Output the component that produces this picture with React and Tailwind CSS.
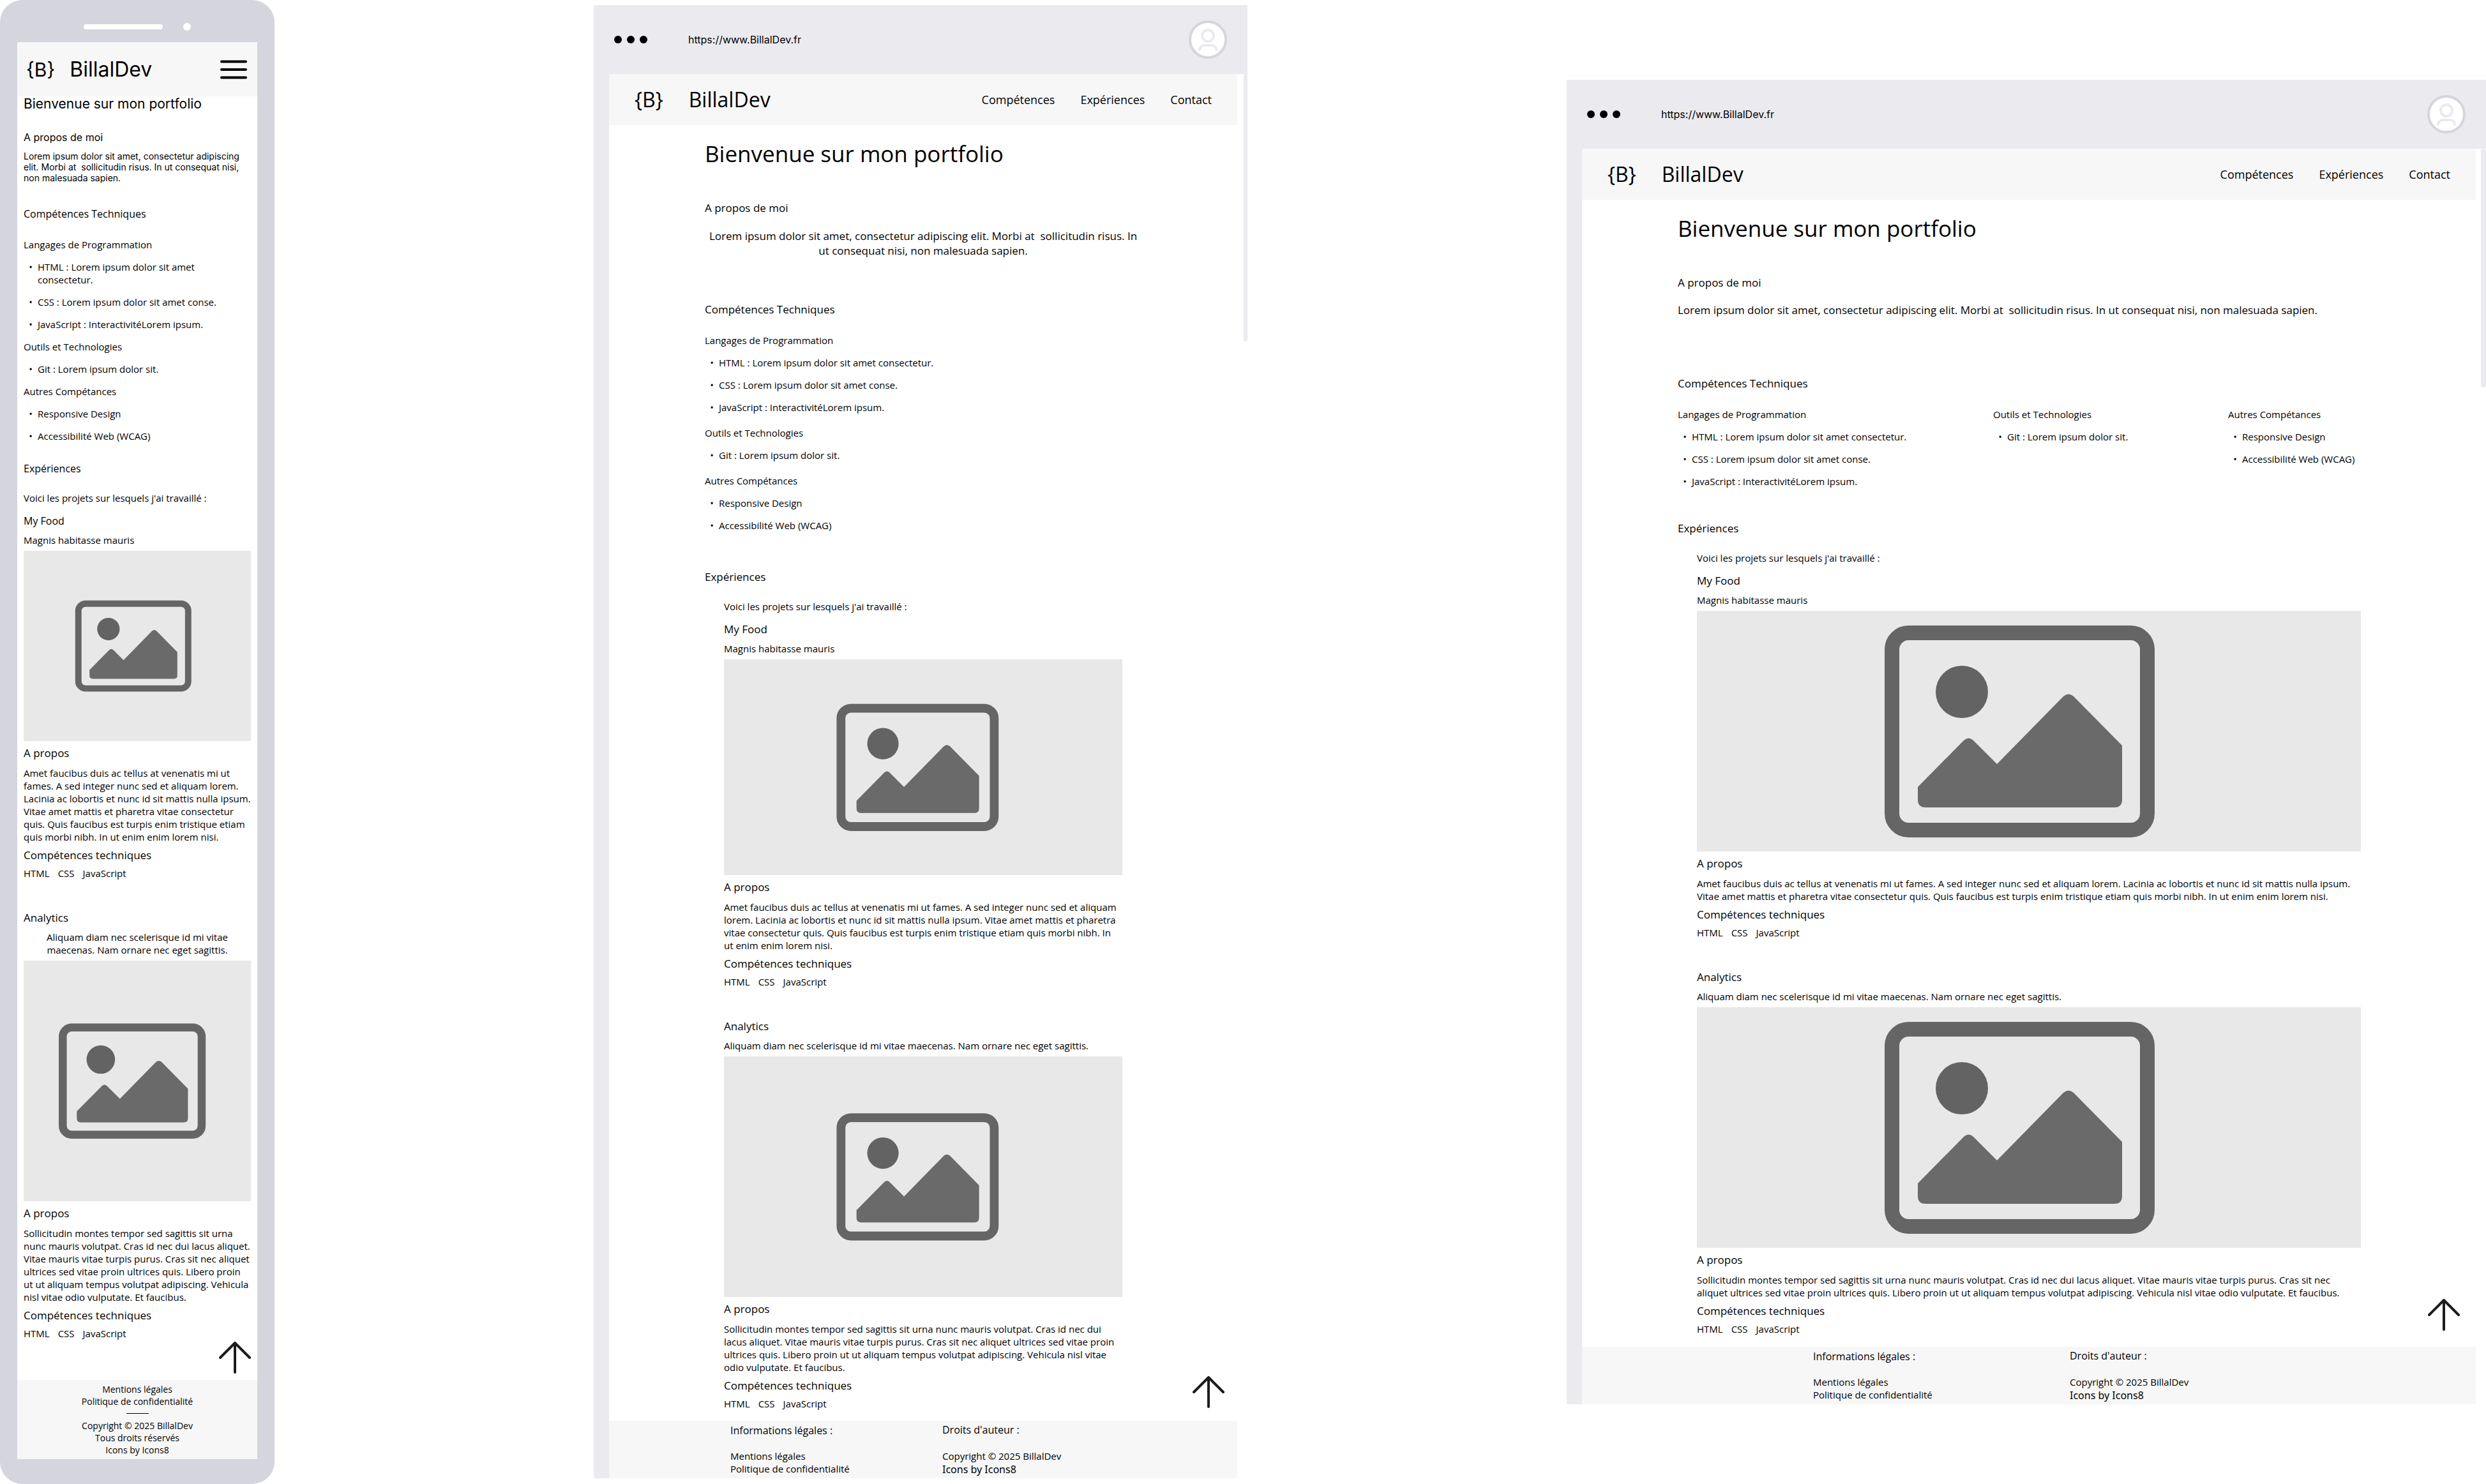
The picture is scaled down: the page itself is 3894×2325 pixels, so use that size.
import React from "react";

const INTRO =
  "Lorem ipsum dolor sit amet, consectetur adipiscing elit. Morbi at\u00a0 sollicitudin risus. In ut consequat nisi, non malesuada sapien.";

const SKILLS = [
  {
    title: "Langages de Programmation",
    items: [
      "HTML : Lorem ipsum dolor sit amet consectetur.",
      "CSS : Lorem ipsum dolor sit amet conse.",
      "JavaScript : InteractivitéLorem ipsum.",
    ],
  },
  { title: "Outils et Technologies", items: ["Git : Lorem ipsum dolor sit."] },
  { title: "Autres Compétances", items: ["Responsive Design", "Accessibilité Web (WCAG)"] },
];

const FOOD = {
  title: "My Food",
  subtitle: "Magnis habitasse mauris",
  about:
    "Amet faucibus duis ac tellus at venenatis mi ut fames. A sed integer nunc sed et aliquam lorem. Lacinia ac lobortis et nunc id sit mattis nulla ipsum. Vitae amet mattis et pharetra vitae consectetur quis. Quis faucibus est turpis enim tristique etiam quis morbi nibh. In ut enim enim lorem nisi.",
};

const ANALYTICS = {
  title: "Analytics",
  subtitle: "Aliquam diam nec scelerisque id mi vitae maecenas. Nam ornare nec eget sagittis.",
  about:
    "Sollicitudin montes tempor sed sagittis sit urna nunc mauris volutpat. Cras id nec dui lacus aliquet. Vitae mauris vitae turpis purus. Cras sit nec aliquet ultrices sed vitae proin ultrices quis. Libero proin ut ut aliquam tempus volutpat adipiscing. Vehicula nisl vitae odio vulputate. Et faucibus.",
};

function Placeholder({ height }) {
  return (
    <svg
      role="img"
      aria-label="Aperçu du projet"
      viewBox="0 0 1040 693"
      preserveAspectRatio="xMidYMid slice"
      className={`mt-[7px] block w-full bg-[#e8e8e8] ${height}`}
    >
      <rect x="305.5" y="192.5" width="400" height="309" rx="26" fill="none" stroke="#656565" strokeWidth="23" />
      <circle cx="415" cy="285" r="41" fill="#636363" />
      <path
        d="M346 434L418 361Q425.500 354 433 361L470 398L574 292Q582 285 590 292L666 369V454Q666 466 654 466H358Q346 466 346 454Z"
        fill="#6a6a6a"
      />
    </svg>
  );
}

function BackToTop({ place }) {
  return (
    <button type="button" aria-label="Retour en haut" className={`absolute size-[50px] ${place}`}>
      <svg viewBox="0 0 50 50" className="size-full" fill="none" stroke="#1c1c1c" strokeWidth="4" strokeLinecap="round" strokeLinejoin="round">
        <path d="M25 48V2M2 25L25 2L48 25" />
      </svg>
    </button>
  );
}

function Skills({ className }) {
  return (
    <div className={className}>
      {SKILLS.map((group) => (
        <section key={group.title}>
          <h3>{group.title}</h3>
          <ul className="mt-[15px] flex flex-col gap-[15px]">
            {group.items.map((item) => (
              <li key={item} className="flex">
                <span aria-hidden="true" className="w-[22px] shrink-0 text-center">•</span>
                <span className="min-w-0">{item}</span>
              </li>
            ))}
          </ul>
        </section>
      ))}
    </div>
  );
}

function Project({ project, titleClass = "text-[17px]", subtitleClass = "", height, className }) {
  return (
    <article className={className}>
      <h3 className={`leading-[22px] ${titleClass}`}>{project.title}</h3>
      <p className={`mt-[9px] ${subtitleClass}`}>{project.subtitle}</p>
      <Placeholder height={height} />
      <h4 className="mt-[8px] text-[17px] leading-[22px]">A propos</h4>
      <p className="mt-[10px]">{project.about}</p>
      <h4 className="mt-[8px] text-[17px] leading-[22px]">Compétences techniques</h4>
      <ul className="mt-[7px] flex gap-[13px]">
        <li>HTML</li>
        <li>CSS</li>
        <li>JavaScript</li>
      </ul>
    </article>
  );
}

function Phone() {
  return (
    <div className="rounded-[35px] bg-[#d5d5de] px-[27px] pb-[39px]">
      <div className="flex h-[66px] items-center justify-center gap-[32px] pt-[18px]">
        <span className="h-[8px] w-[124px] rounded-full bg-white" />
        <span className="size-[12px] rounded-full bg-white" />
      </div>
      <div className="bg-white">
        <header className="flex h-[85px] items-center bg-[#f7f7f7] pl-[14px] pr-[16px] font-['Inter',sans-serif] text-[32px]">
          <span className="text-[30px]">{"{B}"}</span>
          <span className="ml-[23px]">BillalDev</span>
          <button type="button" aria-label="Menu" className="ml-auto">
            <svg viewBox="0 0 42 30" className="h-[30px] w-[42px]" stroke="#000" strokeWidth="4" strokeLinecap="round">
              <path d="M2 2.500H40M2 15H40M2 27.500H40" />
            </svg>
          </button>
        </header>
        <main className="relative px-[10px] pb-[63px]">
          <div className="font-['Inter',sans-serif]">
            <h1 className="text-[21px] leading-[24px]">Bienvenue sur mon portfolio</h1>
            <h2 className="mt-[29px] text-[16px] leading-[22px]">A propos de moi</h2>
            <p className="mt-[10px] text-[14px] leading-[17px]">{INTRO}</p>
          </div>
          <h2 className="mt-[37px] text-[16px] leading-[22px]">Compétences Techniques</h2>
          <Skills className="mt-[27px] flex flex-col gap-[15px]" />
          <h2 className="mt-[30px] text-[16px] leading-[22px]">Expériences</h2>
          <p className="mt-[25px]">Voici les projets sur lesquels j'ai travaillé :</p>
          <Project project={FOOD} className="mt-[15px]" titleClass="text-[16px]" height="h-[298px]" />
          <Project project={ANALYTICS} className="mt-[49px]" subtitleClass="text-center" height="h-[377px]" />
          <BackToTop place="bottom-[10px] right-[10px]" />
        </main>
        <footer className="flex flex-col items-center bg-[#f7f7f7] py-[5px] text-[14px] leading-[19px]">
          <a href="#mentions">Mentions légales</a>
          <a href="#confidentialite">Politique de confidentialité</a>
          <hr className="my-[9px] w-[35px] border-t border-black" />
          <p>Copyright © 2025 BillalDev</p>
          <p>Tous droits réservés</p>
          <p>Icons by Icons8</p>
        </footer>
      </div>
    </div>
  );
}

function Browser({ scrollbar, children }) {
  return (
    <div className="bg-[#ebeaef]">
      <div className="flex h-[108px] items-center pl-[32px] pr-[32px]">
        <div className="flex gap-[8px]">
          <span className="size-[12px] rounded-full bg-black" />
          <span className="size-[12px] rounded-full bg-black" />
          <span className="size-[12px] rounded-full bg-black" />
        </div>
        <input
          type="text"
          aria-label="Adresse"
          readOnly
          value="https://www.BillalDev.fr"
          className="ml-[64px] w-[400px] bg-transparent font-['Inter',sans-serif] text-[16px] leading-[20px] outline-none"
        />
        <button type="button" aria-label="Compte" className="ml-auto">
          <svg viewBox="0 0 60 60" className="size-[60px]" fill="none" strokeWidth="4" strokeLinecap="round">
            <circle cx="30" cy="30" r="28" fill="#fff" stroke="#d5d5de" />
            <circle cx="30" cy="24" r="9" stroke="#ebeaef" />
            <path d="M17 46A7 7 0 0 1 24 39H36A7 7 0 0 1 43 46" stroke="#ebeaef" />
          </svg>
        </button>
      </div>
      <div className="ml-[24px] flex bg-white">
        <div className="min-w-0 grow">{children}</div>
        <div className={`shrink-0 rounded-full bg-[#ebeaef] ${scrollbar}`} />
      </div>
    </div>
  );
}

function SiteHeader() {
  return (
    <header className="flex h-[80px] items-center bg-[#f7f7f7] px-[40px]">
      <span className="text-[32px] leading-[44px]">{"{B}"}</span>
      <span className="ml-[40px] text-[32px] leading-[44px]">BillalDev</span>
      <nav className="ml-auto flex gap-[40px] text-[18px] leading-[24px]">
        <a href="#competences">Compétences</a>
        <a href="#experiences">Expériences</a>
        <a href="#contact">Contact</a>
      </nav>
    </header>
  );
}

function SiteFooter({ columns }) {
  return (
    <footer className={`grid h-[90px] bg-[#f7f7f7] ${columns}`}>
      <div className="pt-[4px]">
        <h2 className="text-[16px] leading-[22px]">Informations légales :</h2>
        <a href="#mentions" className="mt-[19px] block">Mentions légales</a>
        <a href="#confidentialite" className="block">Politique de confidentialité</a>
      </div>
      <div className="pt-[3px]">
        <h2 className="text-[16px] leading-[22px]">Droits d'auteur :</h2>
        <p className="mt-[20px]">Copyright © 2025 BillalDev</p>
        <p className="font-['Noto_Sans',sans-serif] text-[16px] leading-[22px]">Icons by Icons8</p>
      </div>
    </footer>
  );
}

function Tablet() {
  return (
    <Browser scrollbar="ml-[10px] h-[419px] w-[6px]">
      <SiteHeader />
      <main className="relative px-[150px] pb-[17px] pt-[21px]">
        <h1 className="text-[35px] leading-[48px]">Bienvenue sur mon portfolio</h1>
        <h2 className="mt-[50px] text-[17px] leading-[22px]">A propos de moi</h2>
        <p className="mt-[21px] text-center text-[17px] leading-[23px]">{INTRO}</p>
        <h2 className="mt-[70px] text-[17px] leading-[22px]">Compétences Techniques</h2>
        <Skills className="mt-[27px] flex flex-col gap-[20px]" />
        <h2 className="mt-[60px] text-[17px] leading-[22px]">Expériences</h2>
        <div className="mx-[30px] mt-[25px]">
          <p>Voici les projets sur lesquels j'ai travaillé :</p>
          <Project project={FOOD} className="mt-[15px]" height="h-[338px]" />
          <Project project={ANALYTICS} className="mt-[49px]" height="h-[377px]" />
        </div>
        <BackToTop place="bottom-[20px] right-[20px]" />
      </main>
      <SiteFooter columns="grid-cols-[332px_1fr] pl-[190px]" />
    </Browser>
  );
}

function Desktop() {
  return (
    <Browser scrollbar="ml-[8px] h-[374px] w-[8px]">
      <SiteHeader />
      <main className="relative px-[150px] pb-[18px] pt-[21px]">
        <h1 className="text-[35px] leading-[48px]">Bienvenue sur mon portfolio</h1>
        <h2 className="mt-[50px] text-[17px] leading-[22px]">A propos de moi</h2>
        <p className="mt-[20px] text-[17px] leading-[23px]">{INTRO}</p>
        <h2 className="mt-[93px] text-[17px] leading-[22px]">Compétences Techniques</h2>
        <Skills className="mt-[27px] grid grid-cols-[494px_368px_1fr]" />
        <h2 className="mt-[53px] text-[17px] leading-[22px]">Expériences</h2>
        <div className="mx-[30px] mt-[25px]">
          <p>Voici les projets sur lesquels j'ai travaillé :</p>
          <Project project={FOOD} className="mt-[15px]" height="h-[377px]" />
          <Project project={ANALYTICS} className="mt-[49px]" height="h-[377px]" />
        </div>
        <BackToTop place="bottom-[25px] right-[25px]" />
      </main>
      <SiteFooter columns="grid-cols-[402px_1fr] pl-[362px]" />
    </Browser>
  );
}

export default function App() {
  return (
    <div className="grid grid-cols-[minmax(0,430fr)_minmax(0,1024fr)_minmax(0,1440fr)] items-start gap-x-[500px] bg-white font-['Open_Sans',sans-serif] text-[15px] leading-[20px] text-black">
      <Phone />
      <div className="pt-[8px]">
        <Tablet />
      </div>
      <div className="pt-[125px]">
        <Desktop />
      </div>
    </div>
  );
}
